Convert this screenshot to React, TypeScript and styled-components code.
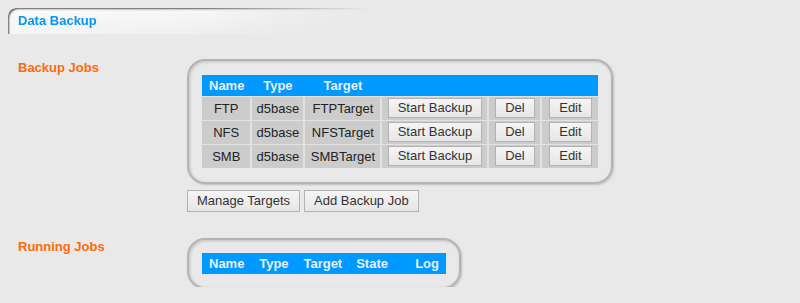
import styled, { createGlobalStyle } from 'styled-components';

const GlobalStyle = createGlobalStyle`
    html, body {
        margin: 0;
        padding: 0;
        background: #e9e9e9;
        font-family: "Liberation Sans", Arial, sans-serif;
        font-size: 13px;
    }
`;

const Page = styled.div`
    padding: 8px;
    height: 287px;
    box-sizing: border-box;
`;

const HeaderTab = styled.div`
    width: 360px;
    height: 26px;
    box-sizing: border-box;
    padding: 5px 0 0 10px;
    border-top-left-radius: 8px;
    background:
        linear-gradient(to bottom, rgba(255, 255, 255, 0.55) 0%, rgba(255, 255, 255, 0) 100%),
        linear-gradient(to right, #f6f6f6 0%, #f0f0f0 40%, rgba(233, 233, 233, 0) 100%);
    box-shadow: inset 2px 2px 2px -1px rgba(60, 60, 60, 0.85);
    -webkit-mask-image: linear-gradient(to right, #000 55%, transparent 100%);
    color: #0994f0;
    font-weight: bold;
    font-size: 13px;
`;

const Section = styled.div<{ top: number }>`
    display: grid;
    grid-template-columns: 179px auto;
    margin-top: ${p => p.top}px;
`;

const SectionLabel = styled.div`
    padding: 1px 0 0 10px;
    color: #ff6a0a;
    font-weight: bold;
`;

const RoundBox = styled.div<{ pad: number }>`
    width: fit-content;
    padding: ${p => p.pad}px 13px;
    border: 2px solid #b4b4b4;
    border-radius: 18px;
    box-shadow: inset 1px 1px 3px rgba(0, 0, 0, 0.18), 1px 1px 2px rgba(0, 0, 0, 0.2);
`;

const JobTable = styled.table`
    border-collapse: collapse;
    border-spacing: 0;
    table-layout: fixed;
`;

const HeadCell = styled.th<{ w: number, align?: string }>`
    width: ${p => p.w}px;
    height: 21px;
    padding: 0 7px;
    background: #0099ff;
    color: #e8eef4;
    font-weight: bold;
    font-size: 13px;
    text-align: ${p => p.align ?? 'center'};
    box-sizing: border-box;
`;

const BodyCell = styled.td`
    height: 24px;
    padding: 0;
    background: #cccccc;
    border-top: 1px solid #e2e2e2;
    border-left: 2px solid #e2e2e2;
    color: #222;
    text-align: center;
    box-sizing: border-box;
    &:first-child {
        border-left: none;
    }
`;

const Button = styled.button`
    height: 20px;
    padding: 0 9px;
    border: 1px solid #b2b2b2;
    background: linear-gradient(to bottom, #f5f5f5 0%, #e6e6e6 100%);
    color: #333;
    font-family: "Liberation Sans", Arial, sans-serif;
    font-size: 13px;
    line-height: 18px;
    cursor: pointer;
`;

const ActionRow = styled.div`
    display: flex;
    gap: 4px;
    margin-top: 6px;
    ${Button} {
        height: 22px;
    }
`;

const jobs = [
    { name: 'FTP', type: 'd5base', target: 'FTPTarget' },
    { name: 'NFS', type: 'd5base', target: 'NFSTarget' },
    { name: 'SMB', type: 'd5base', target: 'SMBTarget' },
];

export default function App() {
    return <>
        <GlobalStyle />
        <Page>
            <HeaderTab>Data Backup</HeaderTab>
            <Section top={25}>
                <SectionLabel>Backup Jobs</SectionLabel>
                <div>
                    <RoundBox pad={14}>
                        <JobTable>
                            <thead>
                                <tr>
                                    <HeadCell w={48}>Name</HeadCell>
                                    <HeadCell w={53}>Type</HeadCell>
                                    <HeadCell w={77}>Target</HeadCell>
                                    <HeadCell w={107} />
                                    <HeadCell w={53} />
                                    <HeadCell w={57} />
                                </tr>
                            </thead>
                            <tbody>
                                {jobs.map(job => <tr key={job.name}>
                                    <BodyCell>{job.name}</BodyCell>
                                    <BodyCell>{job.type}</BodyCell>
                                    <BodyCell>{job.target}</BodyCell>
                                    <BodyCell><Button>Start Backup</Button></BodyCell>
                                    <BodyCell><Button>Del</Button></BodyCell>
                                    <BodyCell><Button>Edit</Button></BodyCell>
                                </tr>)}
                            </tbody>
                        </JobTable>
                    </RoundBox>
                    <ActionRow>
                        <Button>Manage Targets</Button>
                        <Button>Add Backup Job</Button>
                    </ActionRow>
                </div>
            </Section>
            <Section top={26}>
                <SectionLabel>Running Jobs</SectionLabel>
                <RoundBox pad={13}>
                    <JobTable>
                        <thead>
                            <tr>
                                <HeadCell w={48}>Name</HeadCell>
                                <HeadCell w={45}>Type</HeadCell>
                                <HeadCell w={52}>Target</HeadCell>
                                <HeadCell w={45}>State</HeadCell>
                                <HeadCell w={51} align="right">Log</HeadCell>
                            </tr>
                        </thead>
                    </JobTable>
                </RoundBox>
            </Section>
        </Page>
    </>;
}
